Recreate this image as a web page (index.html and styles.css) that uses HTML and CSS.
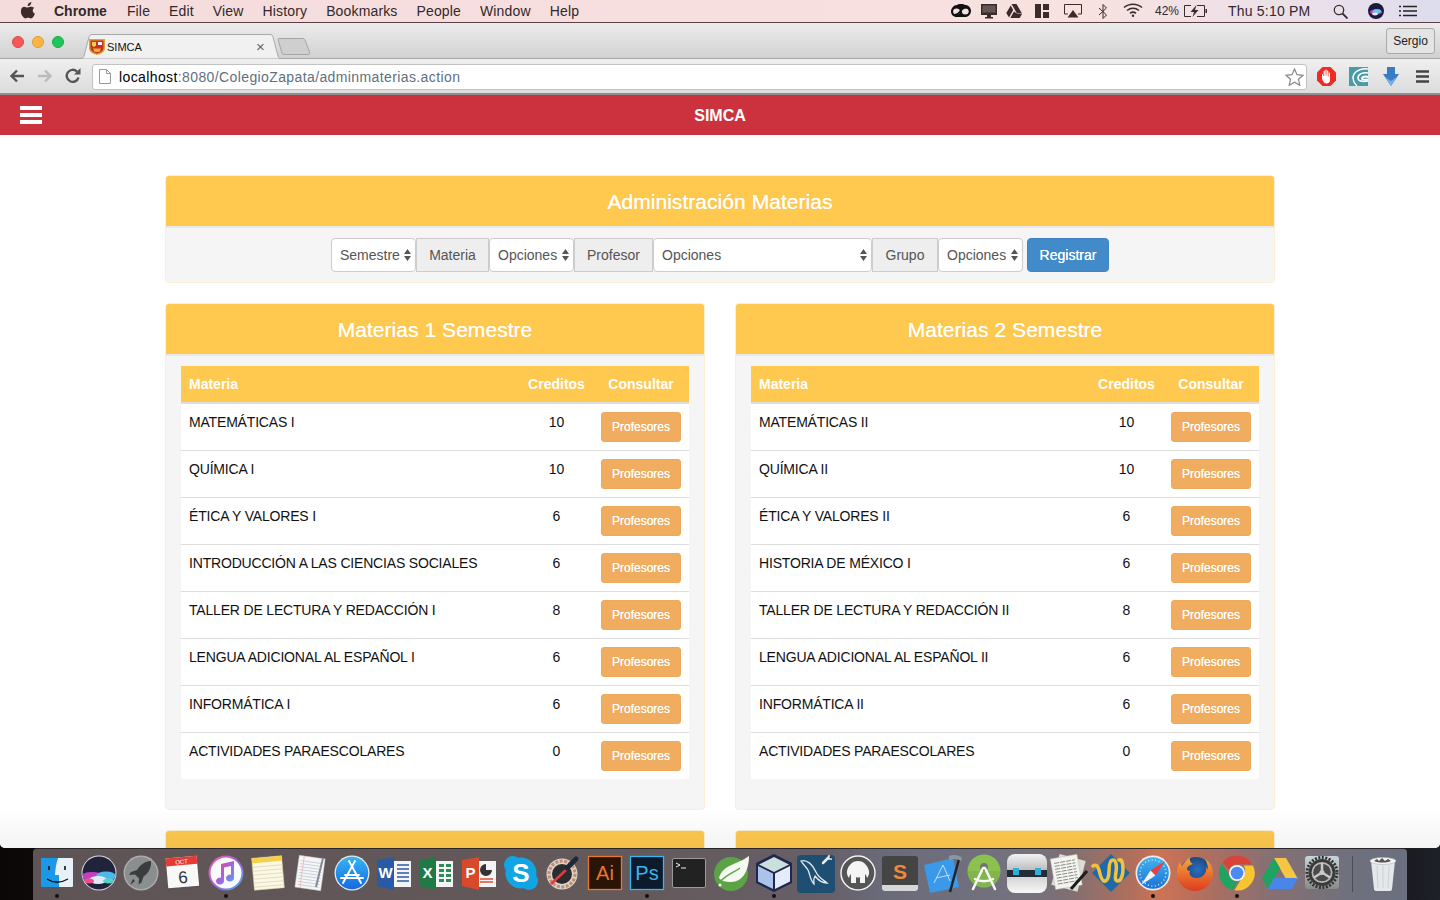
FILE: index.html
```html
<!DOCTYPE html>
<html lang="es">
<head>
<meta charset="utf-8">
<title>SIMCA</title>
<link rel="stylesheet" href="styles.css">
</head>
<body>
<div class="screen">
  <header class="menubar">
    <div class="menu-left">
      <svg class="apple" width="15" height="17" viewBox="0 0 15 17"><path fill="#3b2b2b" d="M10.3 0c.1 1.100-.3 2.100-1 2.900-.7.700-1.700 1.300-2.600 1.200-.1-1 .4-2.100 1-2.800C8.400.6 9.500.1 10.300 0zM13.400 5.800c-1 .6-1.700 1.600-1.700 2.800 0 1.400.9 2.600 2.200 3.100-.3.900-.7 1.700-1.200 2.500-.8 1.100-1.600 2.200-2.800 2.200s-1.500-.7-2.800-.7-1.800.7-2.900.7c-1.200 0-2-1.100-2.800-2.300C.2 12.400-.3 10.700-.1 9c0-2.700 1.800-4.200 3.500-4.200 1.100 0 2.100.8 2.800.8s1.800-.8 3.100-.8c1.700 0 3 .5 3.900 1z"/></svg>
      <strong class="menu-app">Chrome</strong>
      <span>File</span><span>Edit</span><span>View</span><span>History</span><span>Bookmarks</span><span>People</span><span>Window</span><span>Help</span>
    </div>
    <div class="menu-right">
      <svg class="st-cc" width="20" height="14" viewBox="0 0 20 14"><path fill="#111" d="M6 1c1.500-1.300 6-1.500 8 0 3.500 0 6 2.700 6 6s-2.500 6-6 6H5.500C2.500 13 0 10.500 0 7.500S2.500 1 6 1z"/><ellipse cx="5.500" cy="7.500" rx="3.400" ry="3" fill="#f4dfdf"/><ellipse cx="14.300" cy="7.500" rx="3.400" ry="3" fill="#f4dfdf"/><path fill="none" stroke="#111" stroke-width="1.600" d="M4 10.500c4 1 6-7 11-7"/></svg>
      <svg class="st-display" width="16" height="15" viewBox="0 0 16 15"><path fill="#3b2b2b" d="M0 0h16v11H0z"/><path fill="#e8dcdc" d="M1.500 1.500h13v7h-13z" opacity=".25"/><path fill="#3b2b2b" d="M6 11h4v2h2v1.500H4V13h2z"/></svg>
      <svg class="st-drive" width="16" height="14" viewBox="0 0 16 14"><path fill="#3b2b2b" d="M5.500 0h5L16 9.500h-5zM4.700 1.500 7.200 6 3 13.500.3 9zM8 7.500 11.600 10H16l-2.300 4H4.300z"/></svg>
      <svg class="st-layout" width="14" height="14" viewBox="0 0 14 14"><path fill="#3b2b2b" d="M0 0h6v14H0zM8 0h6v6H8zM8 8h6v6H8z"/></svg>
      <svg class="st-air" width="18" height="14" viewBox="0 0 18 14"><path fill="none" stroke="#3b2b2b" d="M4 10H.5V.5h17V10H14"/><path fill="#3b2b2b" d="M9 6l5.500 7.500h-11z"/></svg>
      <svg class="st-bt" width="10" height="15" viewBox="0 0 10 15"><path fill="none" stroke="#3b2b2b" d="M1 4l7.500 7L5 14.500V.5L8.500 4 1 11"/></svg>
      <svg class="st-wifi" width="20" height="14" viewBox="0 0 20 14"><g fill="none" stroke="#3b2b2b" stroke-width="1.500"><path d="M1 4.500c5-4.500 13-4.500 18 0"/><path d="M4 7.500c3.500-3 8.500-3 12 0"/><path d="M7 10.300c1.800-1.400 4.200-1.400 6 0"/></g><circle cx="10" cy="12.800" r="1.200" fill="#3b2b2b"/></svg>
      <span class="st-pct">42%</span>
      <svg class="st-batt" width="23" height="12" viewBox="0 0 23 12"><path fill="none" stroke="#3b2b2b" d="M7 .5H.5v11H7M13 .5h7.500v11H13"/><path fill="#3b2b2b" d="M12.500 0 6.500 7H10L8.500 12l6-7H11zM21.500 4H23v4h-1.500z"/></svg>
      <span class="st-clock">Thu 5:10 PM</span>
      <svg class="st-search" width="15" height="15" viewBox="0 0 15 15"><circle cx="6" cy="6" r="4.700" fill="none" stroke="#3b2b2b" stroke-width="1.300"/><path stroke="#3b2b2b" stroke-width="1.800" d="M9.500 9.500l5 5"/></svg>
      <svg class="st-siri" width="16" height="16" viewBox="0 0 16 16"><circle cx="8" cy="8" r="8" fill="#1b1b3a"/><ellipse cx="8" cy="9" rx="6" ry="2.500" fill="#c04fd8"/><ellipse cx="9" cy="8" rx="4" ry="2" fill="#5fc7f0"/><ellipse cx="7" cy="11" rx="3" ry="1.400" fill="#e8e8f8"/></svg>
      <svg class="st-list" width="18" height="12" viewBox="0 0 18 12"><path stroke="#222" stroke-width="1.500" d="M4 1.500h14M4 6h14M4 10.500h14"/><path stroke="#222" stroke-width="1.500" d="M0 1.500h2M0 6h2M0 10.500h2"/></svg>
    </div>
  </header>

  <div class="window">
    <div class="tabstrip">
      <div class="lights"><i class="light red"></i><i class="light amber"></i><i class="light green"></i></div>
      <div class="tab">
        <svg class="tab-bg" width="202" height="25" viewBox="0 0 202 25"><path fill="#f1f1f1" stroke="#a9a9a9" d="M0 24.500h3c1.500 0 2.500-1 3-2.500L11 3c.4-1.500 1.500-2.500 3-2.500h178c1.500 0 2.600 1 3 2.500l5 19c.5 1.500 1 2.500 2 2.500"/></svg>
        <svg class="favicon" width="16" height="16" viewBox="0 0 16 16"><path fill="#d9a72c" d="M0 0h16v9c0 4-4 6-8 7-4-1-8-3-8-7z"/><path fill="#c92f2b" d="M1.500 1.500h13v7.500c0 3-3.500 4.800-6.500 5.500-3-.7-6.500-2.500-6.500-5.500z"/><path fill="#f2d14b" d="M3 3h4v3.500L5 8 3 6.500z"/><path fill="#eee" d="M9 3h4v3H9z"/><path fill="#e4b23a" d="M4 9.500h8L10.500 13h-5z"/></svg>
        <span class="tab-title">SIMCA</span>
        <span class="tab-close">×</span>
      </div>
      <svg class="newtab" width="34" height="18" viewBox="0 0 34 18"><path fill="#cfcfcf" stroke="#a5a5a5" d="M1 1.500C1 1 1.500.5 2 .5h24c1 0 1.500.5 2 1.500l4.500 12c.5 1.500 0 2.500-1.500 2.500H7c-1 0-1.800-.5-2-1.500z"/></svg>
      <div class="profile">Sergio</div>
    </div>

    <div class="toolbar">
      <svg class="tb-btn" width="16" height="14" viewBox="0 0 16 14"><path fill="none" stroke="#555" stroke-width="2.400" d="M15 7H3M8 1.500 2.500 7 8 12.500"/></svg>
      <svg class="tb-btn tb-fwd" width="16" height="14" viewBox="0 0 16 14"><path fill="none" stroke="#bbb" stroke-width="2.400" d="M1 7h12M8 1.500 13.500 7 8 12.500"/></svg>
      <svg class="tb-btn tb-reload" width="16" height="16" viewBox="0 0 16 16"><path fill="none" stroke="#555" stroke-width="2.400" d="M13.500 9.500A6 6 0 1 1 12 3.600"/><path fill="#555" d="M9 6.500h6.500V0z"/></svg>
      <div class="omnibox">
        <svg class="pageicon" width="12" height="15" viewBox="0 0 12 15"><path fill="#fff" stroke="#999" d="M.5.500h7l4 4v10H.5z"/><path fill="none" stroke="#999" d="M7.500.500v4h4"/></svg>
        <span class="url"><b>localhost</b>:8080/ColegioZapata/adminmaterias.action</span>
        <svg class="star" width="19" height="18" viewBox="0 0 19 18"><path fill="#fff" stroke="#888" stroke-width="1.200" d="M9.500 1l2.500 5.700 6 .6-4.500 4 1.300 6-5.300-3.100-5.300 3.100 1.300-6L1 7.300l6-.6z"/></svg>
      </div>
      <div class="extensions">
        <svg width="19" height="19" viewBox="0 0 19 19"><path fill="#ee2b24" d="M5.500 0h8L19 5.500v8L13.500 19h-8L0 13.500v-8z"/><path fill="#fff" d="M5 7.500c0-.6 1-.6 1 0V9h.6V4c0-.7 1.200-.7 1.200 0v4.500h.5V3c0-.7 1.300-.7 1.300 0v5.500h.5V4c0-.7 1.200-.7 1.200 0v5.500h.5V6c0-.7 1.200-.7 1.200 0v7c0 2-1.500 3.500-3.500 3.500H9.500C7.500 16.500 6.500 15 5 12z"/></svg>
        <svg width="19" height="19" viewBox="0 0 19 19"><path fill="#4a9ba8" d="M0 0h19v19H0z"/><g fill="none" stroke="#fff"><path stroke-width="1.500" d="M19 2C11 1 4 5 4 11c0 3 2 6 4 8"/><path stroke-width="1.500" d="M19 6c-5-1-10 1-10 5 0 3 4 4 10 3"/><path stroke-width="2" d="M19 10c-3-1-6 0-6 1.500s3 1.500 6 1"/></g></svg>
        <svg class="ext-down" width="16" height="19" viewBox="0 0 16 19"><path fill="#3a7cc4" d="M4 0h8v7h4l-8 12L0 7h4z"/><path fill="#6fb1e6" d="M8 19 2 10l6 4 6-4z"/></svg>
        <svg class="ext-menu" width="13" height="13" viewBox="0 0 13 13"><path stroke="#444" stroke-width="2.400" d="M0 1.500h13M0 6.500h13M0 11.500h13"/></svg>
      </div>
    </div>

    <nav class="navbar">
      <span class="burger"><i></i><i></i><i></i></span>
      <span class="brand">SIMCA</span>
    </nav>

    <main class="page">
      <div class="container">
        <section class="panel">
          <h3 class="panel-heading">Administración Materias</h3>
          <form class="filter">
            <select class="ctl w-85"><option>Semestre</option></select>
            <span class="addon w-73">Materia</span>
            <select class="ctl w-85"><option>Opciones</option></select>
            <span class="addon w-79">Profesor</span>
            <select class="ctl w-219"><option>Opciones</option></select>
            <span class="addon w-66">Grupo</span>
            <select class="ctl w-85"><option>Opciones</option></select>
            <button type="button" class="register">Registrar</button>
          </form>
        </section>

        <div class="row">
          <section class="panel">
            <h3 class="panel-heading">Materias 1 Semestre</h3>
            <div class="panel-body">
              <table class="subjects">
                <thead><tr><th class="c-name">Materia</th><th class="c-cred">Creditos</th><th class="c-act">Consultar</th></tr></thead>
                <tbody>
                  <tr><td>MATEMÁTICAS I</td><td class="num">10</td><td class="act"><button type="button" class="prof">Profesores</button></td></tr>
                  <tr><td>QUÍMICA I</td><td class="num">10</td><td class="act"><button type="button" class="prof">Profesores</button></td></tr>
                  <tr><td>ÉTICA Y VALORES I</td><td class="num">6</td><td class="act"><button type="button" class="prof">Profesores</button></td></tr>
                  <tr><td>INTRODUCCIÓN A LAS CIENCIAS SOCIALES</td><td class="num">6</td><td class="act"><button type="button" class="prof">Profesores</button></td></tr>
                  <tr><td>TALLER DE LECTURA Y REDACCIÓN I</td><td class="num">8</td><td class="act"><button type="button" class="prof">Profesores</button></td></tr>
                  <tr><td>LENGUA ADICIONAL AL ESPAÑOL I</td><td class="num">6</td><td class="act"><button type="button" class="prof">Profesores</button></td></tr>
                  <tr><td>INFORMÁTICA I</td><td class="num">6</td><td class="act"><button type="button" class="prof">Profesores</button></td></tr>
                  <tr><td>ACTIVIDADES PARAESCOLARES</td><td class="num">0</td><td class="act"><button type="button" class="prof">Profesores</button></td></tr>
                </tbody>
              </table>
            </div>
          </section>
          <section class="panel">
            <h3 class="panel-heading">Materias 2 Semestre</h3>
            <div class="panel-body">
              <table class="subjects">
                <thead><tr><th class="c-name">Materia</th><th class="c-cred">Creditos</th><th class="c-act">Consultar</th></tr></thead>
                <tbody>
                  <tr><td>MATEMÁTICAS II</td><td class="num">10</td><td class="act"><button type="button" class="prof">Profesores</button></td></tr>
                  <tr><td>QUÍMICA II</td><td class="num">10</td><td class="act"><button type="button" class="prof">Profesores</button></td></tr>
                  <tr><td>ÉTICA Y VALORES II</td><td class="num">6</td><td class="act"><button type="button" class="prof">Profesores</button></td></tr>
                  <tr><td>HISTORIA DE MÉXICO I</td><td class="num">6</td><td class="act"><button type="button" class="prof">Profesores</button></td></tr>
                  <tr><td>TALLER DE LECTURA Y REDACCIÓN II</td><td class="num">8</td><td class="act"><button type="button" class="prof">Profesores</button></td></tr>
                  <tr><td>LENGUA ADICIONAL AL ESPAÑOL II</td><td class="num">6</td><td class="act"><button type="button" class="prof">Profesores</button></td></tr>
                  <tr><td>INFORMÁTICA II</td><td class="num">6</td><td class="act"><button type="button" class="prof">Profesores</button></td></tr>
                  <tr><td>ACTIVIDADES PARAESCOLARES</td><td class="num">0</td><td class="act"><button type="button" class="prof">Profesores</button></td></tr>
                </tbody>
              </table>
            </div>
          </section>
        </div>

        <div class="row">
          <section class="panel"><div class="panel-heading panel-stub"></div></section>
          <section class="panel"><div class="panel-heading panel-stub"></div></section>
        </div>
      </div>
      <div class="dock-shadow"></div>
    </main>
  </div>

  <div class="dock">
    <div class="dock-item run"><svg width="40" height="40" viewBox="0 0 40 40"><path fill="#1c98e8" d="M5 5h16c-2 6-3 12-3 17h4v12H5a1 1 0 0 1-1-1V6a1 1 0 0 1 1-1z"/><path fill="#e9f1f8" d="M21 5h14a1 1 0 0 1 1 1v27a1 1 0 0 1-1 1H22V22h-4c0-5 1-11 3-17z"/><path stroke="#111" stroke-width="1.600" d="M12 13v4M28 13v4"/><path fill="none" stroke="#111" stroke-width="1.300" d="M10 26c6 4 14 4 21 0"/></svg></div>
    <div class="dock-item"><svg width="40" height="40" viewBox="0 0 40 40"><defs><clipPath id="siriClip"><circle cx="20" cy="20" r="16.500"/></clipPath></defs><circle cx="20" cy="20" r="17.500" fill="#d9d9e4"/><circle cx="20" cy="20" r="16.500" fill="#20233c"/><g clip-path="url(#siriClip)"><ellipse cx="13" cy="24" rx="12" ry="5" fill="#c43fbd"/><ellipse cx="27" cy="23" rx="10" ry="4.500" fill="#4fb8ea"/><ellipse cx="19" cy="27" rx="9" ry="4" fill="#dfe9f6"/><ellipse cx="10" cy="28" rx="5" ry="2.500" fill="#ee4f87"/><ellipse cx="30" cy="28" rx="6" ry="2.500" fill="#4fd4c8"/></g></svg></div>
    <div class="dock-item"><svg width="40" height="40" viewBox="0 0 40 40"><circle cx="20" cy="20" r="17.500" fill="#a8acad"/><circle cx="20" cy="20" r="16" fill="#8a8e8f"/><path fill="#3a3d40" d="M30 8c-6 0-11 4-14 9l-6 2-2 3 6-.5 4 4-.5 6 3-2 2-6c5-3 8-9 7.500-15.500z"/><path fill="#3a3d40" d="M12 26l2 2-5 4z"/></svg></div>
    <div class="dock-item"><svg width="40" height="40" viewBox="0 0 40 40"><g transform="rotate(-5 20 20)"><rect x="4" y="5" width="31" height="31" fill="#555"/><rect x="4" y="4" width="31" height="30" fill="#f8f8f8"/><rect x="4" y="4" width="31" height="8" fill="#e33b35"/><text x="19.500" y="10.800" class="cal-month">OCT</text><text x="19.500" y="30" class="cal-day">6</text></g></svg></div>
    <div class="dock-item run"><svg width="40" height="40" viewBox="0 0 40 40"><defs><linearGradient id="itRing" x1="0" y1="0" x2="1" y2="1"><stop offset="0" stop-color="#f35fa0"/><stop offset=".5" stop-color="#a05fe0"/><stop offset="1" stop-color="#3fb5ee"/></linearGradient><linearGradient id="itNote" x1="0" y1="0" x2="1" y2="1"><stop offset="0" stop-color="#f0476f"/><stop offset=".5" stop-color="#a463e0"/><stop offset="1" stop-color="#4fa8ee"/></linearGradient></defs><circle cx="20" cy="20" r="17.500" fill="url(#itRing)"/><circle cx="20" cy="20" r="15.500" fill="#fafafa"/><path fill="url(#itNote)" d="M15 11l13-3v17a4 3.500 0 1 1-3-3.300V13l-7 1.600V28a4 3.500 0 1 1-3-3.300z"/></svg></div>
    <div class="dock-item"><svg width="40" height="40" viewBox="0 0 40 40"><g transform="rotate(-5 20 20)"><rect x="5" y="4" width="30" height="32" fill="#fbf8e4" stroke="#d8cfa2" stroke-width=".5"/><rect x="5" y="4" width="30" height="5" fill="#f6cf4c"/><path stroke="#d8d2b8" stroke-width=".7" d="M5 13h30M5 17h30M5 21h30M5 25h30M5 29h30M5 33h30"/></g></svg></div>
    <div class="dock-item"><svg width="40" height="40" viewBox="0 0 40 40"><g transform="rotate(8 20 20)"><rect x="7" y="4" width="26" height="32" fill="#f6f6f6" stroke="#ccc" stroke-width=".5"/><path stroke="#b8c4d4" stroke-width=".7" d="M9 9h22M9 12h22M9 15h22M9 18h22M9 21h22M9 24h22M9 27h22M9 30h22M9 33h22"/><path stroke="#eda3a3" stroke-width=".6" d="M12 4v32"/></g><path stroke="#7f8a96" stroke-width="2" d="M33 5l-7 29"/></svg></div>
    <div class="dock-item"><svg width="40" height="40" viewBox="0 0 40 40"><defs><linearGradient id="asBg" x1="0" y1="0" x2="0" y2="1"><stop offset="0" stop-color="#35b5f5"/><stop offset="1" stop-color="#1668e0"/></linearGradient></defs><circle cx="20" cy="20" r="17.500" fill="#e8e8e8"/><circle cx="20" cy="20" r="16.200" fill="url(#asBg)"/><path fill="none" stroke="#fff" stroke-width="1.900" stroke-linecap="round" d="M23 8 11 30M17 8l12 22M9 25h22M13 22h14"/></svg></div>
    <div class="dock-item"><svg width="40" height="40" viewBox="0 0 40 40"><rect x="18" y="8" width="19" height="26" fill="#f4f4f4"/><path stroke="#2d5a9e" stroke-width="1.500" d="M23 12h12M23 16h12M23 20h12M23 24h12M23 28h12"/><path fill="#2a5aa6" d="M3 7l17-3v33L3 33z"/><text x="11.500" y="25" class="office">W</text></svg></div>
    <div class="dock-item"><svg width="40" height="40" viewBox="0 0 40 40"><rect x="18" y="8" width="19" height="26" fill="#f4f4f4"/><path fill="#2f8b55" d="M23 11h5v3h-5zM30 11h5v3h-5zM23 16h5v3h-5zM30 16h5v3h-5zM23 21h5v3h-5zM30 21h5v3h-5zM23 26h5v3h-5zM30 26h5v3h-5z"/><path fill="#1f7a46" d="M3 7l17-3v33L3 33z"/><text x="11.500" y="25" class="office">X</text></svg></div>
    <div class="dock-item"><svg width="40" height="40" viewBox="0 0 40 40"><rect x="18" y="8" width="19" height="26" fill="#f4f4f4"/><path fill="#333" d="M27 11a6 6 0 1 0 6 6h-6z"/><path stroke="#d9502e" stroke-width="1.300" d="M21 26h13M21 29h13"/><path fill="#d8492b" d="M3 7l17-3v33L3 33z"/><text x="11.500" y="25" class="office">P</text></svg></div>
    <div class="dock-item"><svg width="40" height="40" viewBox="0 0 40 40"><circle cx="12" cy="12" r="9" fill="#11a5e4"/><circle cx="28" cy="28" r="9" fill="#11a5e4"/><circle cx="20" cy="20" r="15.500" fill="#11a5e4"/><text x="20" y="29" class="skype">S</text></svg></div>
    <div class="dock-item"><svg width="40" height="40" viewBox="0 0 40 40"><circle cx="19" cy="21" r="15.500" fill="#d8d4d0"/><circle cx="19" cy="21" r="13" fill="none" stroke="#c98a6a" stroke-width="3" stroke-dasharray="3 1.500"/><circle cx="19" cy="21" r="10" fill="#2c2c2e"/><path stroke="#e13b3f" stroke-width="2.500" d="M8 31l16-15"/><path stroke="#1e2a3a" stroke-width="5" stroke-linecap="round" d="M24 15l9-9"/></svg></div>
    <div class="dock-item"><svg width="40" height="40" viewBox="0 0 40 40"><rect x="3.500" y="3.500" width="33" height="33" fill="#2a1406" stroke="#e8772b" stroke-width="1.300"/><text x="20" y="27" class="adobe ai">Ai</text></svg></div>
    <div class="dock-item run"><svg width="40" height="40" viewBox="0 0 40 40"><rect x="3.500" y="3.500" width="33" height="33" fill="#0c1a2c" stroke="#35b6ee" stroke-width="1.300"/><text x="20" y="27" class="adobe ps">Ps</text></svg></div>
    <div class="dock-item"><svg width="40" height="40" viewBox="0 0 40 40"><rect x="3.500" y="5.500" width="33" height="29" rx="1.500" fill="#222" stroke="#9a9a9a" stroke-width="1"/><path fill="none" stroke="#eee" stroke-width="1" d="M7 10l4 2-4 2M12 15h5"/></svg></div>
    <div class="dock-item"><svg width="40" height="40" viewBox="0 0 40 40"><circle cx="19" cy="21" r="17" fill="#5aa445"/><path fill="#f6f8f2" d="M37 3c0 14-6 26-18 26-5 0-10-1-12-4 4-14 18-13 30-22z"/><path fill="none" stroke="#5aa445" stroke-width="1.500" d="M7 30c6-8 14-10 21-15"/><circle cx="8" cy="32" r="1.500" fill="#f6f8f2"/></svg></div>
    <div class="dock-item run"><svg width="40" height="40" viewBox="0 0 40 40"><path fill="#20264c" d="M20 1l18 9v20L20 39 2 30V10z"/><path fill="#c9e0dc" d="M20 4l15 7.500L20 19 5 11.500z"/><path fill="#a9c3ea" d="M4 13l15 7.500V36L4 28.500z"/><path fill="#e3ecf8" d="M36 13l-15 7.500V36l15-7.500z"/></svg></div>
    <div class="dock-item"><svg width="40" height="40" viewBox="0 0 40 40"><rect x="1" y="2" width="38" height="38" rx="4" fill="#1f4e73"/><path fill="none" stroke="#dfe9ef" stroke-width="1.300" d="M5 8c6-2 12 4 15 11 2 5 6 7 11 11-5 0-9-3-12-7-2 3-1 6-1 8-4-4-4-10-6-14-2-3-5-6-7-9z"/><path stroke="#e8f0f4" stroke-width="2.500" stroke-linecap="round" d="M27 10l6-6"/><path stroke="#e8f0f4" stroke-width="1.500" d="M33 2v4h3"/></svg></div>
    <div class="dock-item"><svg width="40" height="40" viewBox="0 0 40 40"><circle cx="20" cy="20" r="17.800" fill="#555"/><circle cx="20" cy="20" r="17" fill="none" stroke="#f2f2f2" stroke-width="1.500"/><path fill="#f4f4f4" d="M20 8c-6 0-10 5-11 10-.4 3 .5 5 2 7 .5-2 1-3 2-4v9h5v-6c1 .7 3 .7 4 0v6h5v-9c1 1 1.500 2 2 4 1.500-2 2.400-4 2-7-1-5-5-10-11-10z"/></svg></div>
    <div class="dock-item"><svg width="40" height="40" viewBox="0 0 40 40"><rect x="2" y="3" width="36" height="33" rx="3" fill="#444"/><path fill="#d6d6d6" d="M2 32h36v3a3 3 0 0 1-3 3H5a3 3 0 0 1-3-3z"/><text x="20" y="26" class="sublime">S</text></svg></div>
    <div class="dock-item"><svg width="40" height="40" viewBox="0 0 40 40"><path fill="#3a99e8" d="M2 12 31 5l6 29-29 6z"/><path fill="none" stroke="#bfe0fa" stroke-width="1" d="M12 30l9-18 7 16M14 25l14-3"/><path stroke="#20242a" stroke-width="2.500" d="M37 6l-9 33"/><path fill="#8b98a4" d="M27 3c5-2 10-1 13 2l-1 3c-3-2-7-3-12-1z"/></svg></div>
    <div class="dock-item"><svg width="40" height="40" viewBox="0 0 40 40"><circle cx="20" cy="18" r="16.500" fill="#8cc152"/><path fill="#78a948" d="M3.500 18h33a16.500 16.500 0 0 1-33 0z" opacity=".5"/><circle cx="20" cy="14" r="4" fill="#6c7a66"/><path fill="none" stroke="#f6f6f6" stroke-width="2.500" stroke-linecap="round" d="M19 15 9 36M21 15l10 21M11 26c5 3 13 3 18 0"/></svg></div>
    <div class="dock-item"><svg width="40" height="40" viewBox="0 0 40 40"><defs><linearGradient id="aoBg" x1="0" y1="0" x2="0" y2="1"><stop offset="0" stop-color="#f2f2f2"/><stop offset=".45" stop-color="#b8b8b8"/><stop offset=".55" stop-color="#d0d0d0"/><stop offset="1" stop-color="#f8f8f8"/></linearGradient></defs><rect y="1" width="40" height="39" rx="8" fill="url(#aoBg)"/><rect y="17" width="40" height="7" fill="#222c36"/><path fill="#2fb0da" d="M6 15h6v7H6zM28 15h6v7h-6z"/></svg></div>
    <div class="dock-item"><svg width="40" height="40" viewBox="0 0 40 40"><g transform="rotate(15 20 20)"><rect x="6" y="4" width="27" height="32" fill="#dcdcd4"/></g><g transform="rotate(-10 20 20)"><rect x="4" y="3" width="27" height="31" fill="#f4f4ee" stroke="#bbb" stroke-width=".5"/><path stroke="#777" stroke-width=".8" stroke-dasharray="5 1" d="M7 8h21M7 11h21M7 14h21M7 17h21M7 20h21M7 23h21M7 26h21M7 29h21"/></g><path stroke="#1c1c1c" stroke-width="3" d="M38 18 22 36"/></svg></div>
    <div class="dock-item"><svg width="40" height="40" viewBox="0 0 40 40"><path fill="#1e69a8" d="M20 1l19 19-19 19L1 20z"/><path fill="none" stroke="#f3c23d" stroke-width="3.500" stroke-linecap="round" d="M2 13c3-2 5 0 6 4s2 10 5 11 5-4 5-10 1-11 4-11 4 6 3 12-1 9 2 9 5-6 5-12-1-10-4-9"/></svg></div>
    <div class="dock-item run"><svg width="40" height="40" viewBox="0 0 40 40"><defs><linearGradient id="sfBg" x1="0" y1="0" x2="0" y2="1"><stop offset="0" stop-color="#45b2ee"/><stop offset="1" stop-color="#1a72d8"/></linearGradient></defs><circle cx="20" cy="20" r="17.500" fill="#ececec"/><circle cx="20" cy="20" r="15.800" fill="url(#sfBg)"/><circle cx="20" cy="20" r="13" fill="none" stroke="#d5e8f8" stroke-width="1.500" stroke-dasharray="1 2.500"/><path fill="#ef3b3b" d="M32 8 17.500 17.500l5 5z"/><path fill="#f4f4f4" d="M8 32l14.500-9.500-5-5z"/></svg></div>
    <div class="dock-item"><svg width="40" height="40" viewBox="0 0 40 40"><defs><radialGradient id="ffBlue" cx=".55" cy=".4" r=".6"><stop offset="0" stop-color="#2b6fc2"/><stop offset="1" stop-color="#16365f"/></radialGradient><linearGradient id="ffOr" x1="0" y1="0" x2="0" y2="1"><stop offset="0" stop-color="#f8a83a"/><stop offset="1" stop-color="#dc3c20"/></linearGradient></defs><circle cx="21" cy="20" r="16" fill="url(#ffBlue)"/><path fill="url(#ffOr)" d="M30 6c5 3 8 8 8 14 0 10-8 18-18 18S2 30 2 20c0-4 1-8 3-11 0 2 1 3 2 4 2-4 6-7 8-9-1 3 1 6 3 7-4 1-6 3-6 5 0 1 1 2 3 2 0 1-1 2 0 4 2 3 7 4 11 2 4-2 6-6 5-10 1 1 2 2 2 3 0-4-1-8-3-11z"/></svg></div>
    <div class="dock-item run"><svg width="40" height="40" viewBox="0 0 40 40"><path fill="#d8443a" d="M20 2.500A17.500 17.500 0 0 1 35.200 11.200H20a8.800 8.800 0 0 0-8 5L5.300 9.500A17.500 17.500 0 0 1 20 2.500z"/><path fill="#1ea362" d="M4.800 10.500 12 22a8.800 8.800 0 0 0 8.500 6.700l-4.500 8.400A17.500 17.500 0 0 1 4.800 10.500z"/><path fill="#f8c530" d="M36 12.500A17.500 17.500 0 0 1 17.500 37.300L26 23a8.800 8.800 0 0 0 .6-10.500z"/><circle cx="20" cy="20" r="8" fill="#f4f4f4"/><circle cx="20" cy="20" r="6.300" fill="#4a8af4"/></svg></div>
    <div class="dock-item"><svg width="40" height="40" viewBox="0 0 40 40"><path fill="#f6c544" d="M14 5h12l12 21H26z"/><path fill="#1ea362" d="M14 5 2 25l6 11 12-21z"/><path fill="#4a86e8" d="M14 25h24l-6 11H8z"/></svg></div>
    <div class="dock-item"><svg width="40" height="40" viewBox="0 0 40 40"><defs><linearGradient id="spBg" x1="0" y1="0" x2="0" y2="1"><stop offset="0" stop-color="#c5d5d5"/><stop offset="1" stop-color="#8a8a8a"/></linearGradient></defs><rect x="3" y="3" width="34" height="33" rx="3" fill="url(#spBg)"/><circle cx="20" cy="19.500" r="15" fill="none" stroke="#333" stroke-width="3" stroke-dasharray="2 1.500"/><circle cx="20" cy="19.500" r="13.500" fill="#3a3a3a"/><circle cx="20" cy="19.500" r="10.500" fill="#b8b8b8"/><circle cx="20" cy="19.500" r="8.800" fill="#4a4a4a"/><path stroke="#c8c8c8" stroke-width="2.500" d="M20 19.500V10M20 19.500l-8 5M20 19.500l8 5"/><circle cx="20" cy="19.500" r="2.500" fill="#c8c8c8"/></svg></div>
    <div class="dock-sep"></div>
    <div class="dock-item"><svg width="40" height="40" viewBox="0 0 40 40"><path fill="#e4e8ea" d="M8 8h24l-3 28c0 1-1 2-2 2H13c-1 0-2-1-2-2z"/><ellipse cx="20" cy="8" rx="13" ry="3.500" fill="#f4f4f4" stroke="#b5b5b5" stroke-width=".6"/><path fill="#555" d="M11 8l3-2 2 2 3-3 3 3 3-2 3 2c-5 2-12 2-17 0z"/><path stroke="#c4cacc" stroke-width=".8" d="M14 13l1 22M20 13v22M26 13l-1 22"/></svg></div>
  </div>
</div>
</body>
</html>
```
FILE: styles.css
```css
* { box-sizing: border-box; }
html, body { margin: 0; padding: 0; }
body { font-family: "Liberation Sans", Arial, sans-serif; background: #000; }
svg { display: block; flex: none; }

.screen {
  position: relative;
  width: 1440px;
  height: 900px;
  overflow: hidden;
  background: linear-gradient(90deg, #0a0706 0%, #100b0a 5%, #0e0e10 90%, #1d2026 100%);
}

/* macOS menu bar */
.menubar {
  height: 23px;
  display: flex;
  justify-content: space-between;
  align-items: center;
  padding-bottom: 1px;
  background: linear-gradient(90deg, #f4dcdc 0%, #f7e0df 60%, #f8e2e0 75%, #e6dfec 95%, #dcdcec 100%);
  border-bottom: 1px solid #5a3f45;
  font-size: 14px;
  color: #33282a;
}
.menu-left { display: flex; align-items: center; gap: 19px; letter-spacing: .15px; }
.apple { margin-left: 21px; margin-right: -1px; }
.menu-app { margin-right: 1px; letter-spacing: 0; }
.menu-right { display: flex; align-items: center; position: relative; height: 22px; width: 500px; }
.menu-right > * { position: absolute; }
.st-cc { left: 11px; top: 4px; }
.st-display { left: 41px; top: 4px; }
.st-drive { left: 66px; top: 4px; }
.st-layout { left: 95px; top: 4px; }
.st-air { left: 124px; top: 4px; }
.st-bt { left: 158px; top: 4px; }
.st-wifi { left: 183px; top: 3px; }
.st-pct { left: 215px; top: 4px; font-size: 12px; }
.st-batt { left: 244px; top: 5px; }
.st-clock { left: 288px; top: 3px; font-size: 14px; letter-spacing: .2px; }
.st-search { left: 393px; top: 4px; }
.st-siri { left: 428px; top: 3px; }
.st-list { left: 459px; top: 5px; }

/* browser chrome */
.window {
  height: 825px;
  overflow: hidden;
  border-radius: 0 0 5px 5px;
  display: flex;
  flex-direction: column;
  background: #fff;
}
.tabstrip {
  height: 36px;
  flex: none;
  display: flex;
  align-items: flex-end;
  background: linear-gradient(#ececec, #d1d1d1);
  border-bottom: 1px solid #a6a6a6;
  position: relative;
}
.lights { display: flex; gap: 8px; margin-left: 12px; align-self: flex-start; margin-top: 13px; }
.light { width: 12px; height: 12px; border-radius: 50%; display: block; }
.red { background: #f5585a; border: 1px solid #e2463f; }
.amber { background: #fbb545; border: 1px solid #e09e2d; }
.green { background: #21c55a; border: 1px solid #14ae43; }
.tab {
  position: relative;
  width: 202px;
  height: 25px;
  margin-left: 14px;
  margin-bottom: -1px;
  display: flex;
  align-items: center;
  padding-left: 11px;
}
.tab-bg { position: absolute; left: 0; top: 0; }
.favicon { position: relative; margin-top: 1px; }
.tab-title { position: relative; font-size: 11px; color: #111; margin-left: 2px; margin-top: 1px; }
.tab-close { position: absolute; left: 178px; top: 4px; font-size: 15px; color: #666; line-height: 17px; }
.newtab { margin-left: -3px; margin-bottom: 2px; }
.profile {
  margin-left: auto;
  margin-right: 5px;
  margin-bottom: 4px;
  width: 49px;
  height: 26px;
  border: 1px solid #a9a9a9;
  border-radius: 3px;
  font-size: 12px;
  line-height: 24px;
  text-align: center;
  color: #222;
  background: #e4e4e4;
}
.toolbar {
  height: 36px;
  flex: none;
  display: flex;
  align-items: center;
  padding-left: 9px;
  background: linear-gradient(#efefef, #dcdcdc);
  border-bottom: 2px solid #8f8f8f;
}
.tb-fwd { margin-left: 12px; }
.tb-reload { margin-left: 12px; }
.omnibox {
  width: 1215px;
  height: 26px;
  margin-left: 11px;
  margin-top: 1px;
  display: flex;
  align-items: center;
  padding-left: 6px;
  padding-right: 2px;
  background: #fff;
  border: 1px solid #c2c2c2;
  border-radius: 3px;
}
.url { font-size: 14px; color: #5f6f80; margin-left: 8px; letter-spacing: .39px; }
.url b { font-weight: normal; color: #000; }
.star { margin-left: auto; }
.extensions {
  display: flex;
  align-items: center;
  margin-left: 10px;
  gap: 13px;
}
.ext-down { margin-left: 2px; }
.ext-menu { margin-left: 4px; }

/* app navbar */
.navbar {
  position: relative;
  height: 40px;
  flex: none;
  background: #cc323e;
  display: flex;
  align-items: center;
  justify-content: center;
  color: #fff;
}
.burger { position: absolute; left: 20px; top: 11px; display: flex; flex-direction: column; gap: 3.500px; }
.burger i { display: block; width: 22px; height: 3.500px; background: #fff; }
.brand { font-size: 16px; font-weight: bold; padding-top: 1px; }

/* page */
.page { position: relative; flex: 1; overflow: hidden; padding-top: 40px; background: #fff; }
.container { width: 1110px; margin: 0 auto; display: flex; flex-direction: column; gap: 20px; }
.row { display: grid; grid-template-columns: 540px 540px; gap: 30px; }
.panel {
  background: #f5f5f5;
  border: 1px solid #fbeed5;
  border-radius: 4px;
}
.panel-heading {
  margin: 0;
  height: 52px;
  background: #ffc94f;
  background-clip: padding-box;
  border-bottom: 2px solid #e8e8e8;
  border-radius: 3px 3px 0 0;
  color: #fff;
  font-size: 21px;
  letter-spacing: .05px;
  font-weight: normal;
  line-height: 51px;
  text-align: center;
  text-shadow: 0 0 .4px #fff;
}
.panel-stub { height: 60px; }
.panel-body { padding: 10px 15px 10px; }
.filter { display: flex; justify-content: center; padding: 10px 0; }
.ctl {
  appearance: none;
  -webkit-appearance: none;
  height: 34px;
  padding: 0 0 0 8px;
  border: 1px solid #ccc;
  border-radius: 4px;
  font: 14px "Liberation Sans", Arial, sans-serif;
  color: #555;
  background: #fff url("data:image/svg+xml,%3Csvg xmlns='http://www.w3.org/2000/svg' width='7' height='12'%3E%3Cpath fill='%23555' d='M3.500 0 7 5H0zM3.500 12 0 7h7z'/%3E%3C/svg%3E") no-repeat right 4px center;
}
.addon {
  height: 34px;
  border: 1px solid #ccc;
  background: #eee;
  color: #555;
  font-size: 14px;
  line-height: 32px;
  text-align: center;
}
.w-85 { width: 85px; }
.w-73 { width: 73px; }
.w-79 { width: 79px; }
.w-219 { width: 219px; }
.w-66 { width: 66px; }
.register {
  width: 82px;
  height: 34px;
  margin-left: 4px;
  padding: 0;
  border: 1px solid #3f84c3;
  border-radius: 4px;
  background: #428bca;
  color: #fff;
  font: 14px "Liberation Sans", Arial, sans-serif;
  text-shadow: 0 0 .6px #fff;
}
.subjects {
  width: 100%;
  border-collapse: separate;
  border-spacing: 0;
  table-layout: fixed;
  margin-bottom: 20px;
  font-size: 14px;
  line-height: 20px;
  color: #111;
}
.subjects th {
  padding: 8px;
  background: #ffc94f;
  color: #fff;
  font-weight: bold;
  text-align: center;
  border-bottom: 2px solid #ddd;
}
.subjects th.c-name { text-align: left; }
.c-cred { width: 73px; }
.c-act { width: 96px; }
.subjects td {
  padding: 8px;
  background: #fff;
  border-top: 1px solid #ddd;
  vertical-align: top;
}
.subjects td:first-child { letter-spacing: -.18px; }
.subjects tbody tr:first-child td { border-top: 0; }
.subjects td.num { text-align: center; }
.subjects td.act { text-align: center; }
.prof {
  display: block;
  width: 80px;
  height: 30px;
  padding: 0;
  border: 1px solid #eeaa5c;
  border-radius: 3px;
  background: #f0ad60;
  color: #fff;
  font: 12px "Liberation Sans", Arial, sans-serif;
  text-shadow: 0 0 .4px #fff;
}
.dock-shadow {
  position: absolute;
  left: 0;
  right: 0;
  bottom: 0;
  height: 40px;
  background: linear-gradient(rgba(0,0,0,0), rgba(0,0,0,.045));
  pointer-events: none;
}

/* Dock */
.dock {
  position: absolute;
  left: 33px;
  top: 848px;
  width: 1374px;
  height: 52px;
  padding-left: 3px;
  display: flex;
  align-items: flex-start;
  border-top: 1px solid #2a2526;
  border-radius: 4px 4px 0 0;
  background: linear-gradient(90deg, #5e5355 0%, #645a5c 45%, #676068 58%, #6a6b7a 62%, #75727e 72%, #7c6f75 75%, #b06f5c 80%, #cd7354 82%, #b26f5e 85%, #877073 90%, #6f707e 96%, #6a7080 100%);
}
.dock-item { position: relative; width: 42.170px; padding: 4px 1px 0; flex: none; }
.dock-item.run::after {
  content: "";
  position: absolute;
  left: 19px;
  top: 45px;
  width: 4px;
  height: 4px;
  border-radius: 50%;
  background: #111;
}
.dock-sep { width: 1px; height: 36px; margin: 7px 9px 0 9px; background: #4b4b55; flex: none; }
.cal-month { font-size: 6px; fill: #fff; text-anchor: middle; font-family: "Liberation Sans", sans-serif; }
.cal-day { font-size: 17px; fill: #333; text-anchor: middle; font-family: "Liberation Sans", sans-serif; }
.office { font-size: 15px; font-weight: bold; fill: #fff; text-anchor: middle; font-family: "Liberation Sans", sans-serif; }
.skype { font-size: 26px; font-weight: bold; fill: #fff; text-anchor: middle; font-family: "Liberation Sans", sans-serif; }
.adobe { font-size: 20px; text-anchor: middle; font-family: "Liberation Sans", sans-serif; }
.ai { fill: #e8772b; }
.ps { fill: #35b6ee; }
.sublime { font-size: 21px; font-weight: bold; fill: #f0893a; text-anchor: middle; font-family: "Liberation Sans", sans-serif; }
```
